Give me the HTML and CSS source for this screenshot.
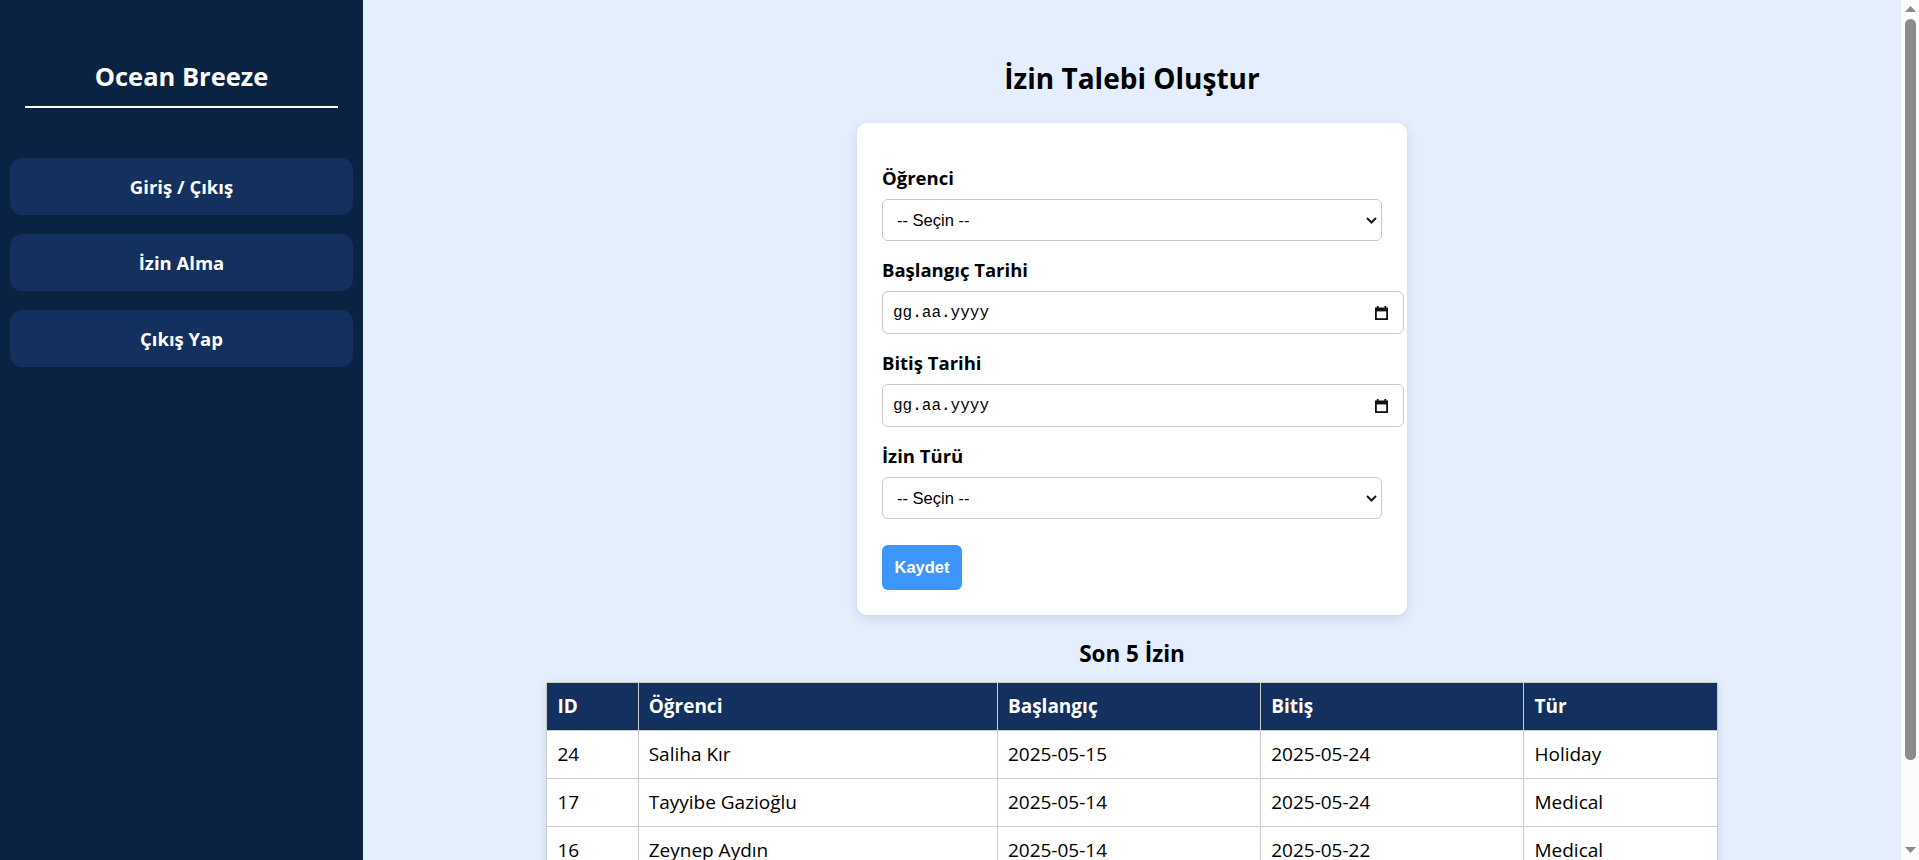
FILE: index.html
```html
<!DOCTYPE html>
<html lang="tr">
<head>
<meta charset="utf-8">
<title>İzin Talebi Oluştur</title>
<link rel="stylesheet" href="styles.css">
</head>
<body>
<div class="layout">
  <aside class="sidebar">
    <h2 class="brand">Ocean Breeze</h2>
    <nav class="nav">
      <a class="nav-item" href="#">Giriş / Çıkış</a>
      <a class="nav-item" href="#">İzin Alma</a>
      <a class="nav-item" href="#">Çıkış Yap</a>
    </nav>
  </aside>
  <main class="main">
    <h1 class="page-title">İzin Talebi Oluştur</h1>
    <form class="card">
      <label class="field-label">Öğrenci</label>
      <div class="select-wrap">
        <select class="select"><option>-- Seçin --</option></select>
        <svg class="chevron" width="11" height="7" viewBox="0 0 11 7"><polyline points="1,1 5.5,5.5 10,1" fill="none" stroke="#1a1a1a" stroke-width="2"/></svg>
      </div>
      <label class="field-label">Başlangıç Tarihi</label>
      <div class="date-input">
        <span class="date-text">gg.aa.yyyy</span>
        <svg class="cal" width="13" height="14" viewBox="0 0 13 14"><rect x="1.8" y="0" width="1.8" height="3" fill="#111"/><rect x="9.4" y="0" width="1.8" height="3" fill="#111"/><rect x="0.9" y="2.4" width="11.2" height="10.7" fill="none" stroke="#111" stroke-width="1.8"/><rect x="0.9" y="2.2" width="11.2" height="3.2" fill="#111"/></svg>
      </div>
      <label class="field-label">Bitiş Tarihi</label>
      <div class="date-input">
        <span class="date-text">gg.aa.yyyy</span>
        <svg class="cal" width="13" height="14" viewBox="0 0 13 14"><rect x="1.8" y="0" width="1.8" height="3" fill="#111"/><rect x="9.4" y="0" width="1.8" height="3" fill="#111"/><rect x="0.9" y="2.4" width="11.2" height="10.7" fill="none" stroke="#111" stroke-width="1.8"/><rect x="0.9" y="2.2" width="11.2" height="3.2" fill="#111"/></svg>
      </div>
      <label class="field-label">İzin Türü</label>
      <div class="select-wrap">
        <select class="select"><option>-- Seçin --</option></select>
        <svg class="chevron" width="11" height="7" viewBox="0 0 11 7"><polyline points="1,1 5.5,5.5 10,1" fill="none" stroke="#1a1a1a" stroke-width="2"/></svg>
      </div>
      <button type="button" class="btn">Kaydet</button>
    </form>

    <h3 class="section-title">Son 5 İzin</h3>
    <table class="table">
      <colgroup>
        <col class="c-id"><col class="c-name"><col class="c-date"><col class="c-date"><col class="c-type">
      </colgroup>
      <thead>
        <tr><th>ID</th><th>Öğrenci</th><th>Başlangıç</th><th>Bitiş</th><th>Tür</th></tr>
      </thead>
      <tbody>
        <tr><td>24</td><td>Saliha Kır</td><td>2025-05-15</td><td>2025-05-24</td><td>Holiday</td></tr>
        <tr><td>17</td><td>Tayyibe Gazioğlu</td><td>2025-05-14</td><td>2025-05-24</td><td>Medical</td></tr>
        <tr><td>16</td><td>Zeynep Aydın</td><td>2025-05-14</td><td>2025-05-22</td><td>Medical</td></tr>
        <tr><td>15</td><td>Elif Yıldız</td><td>2025-05-12</td><td>2025-05-16</td><td>Holiday</td></tr>
      </tbody>
    </table>
  </main>
  <div class="vscroll" aria-hidden="true">
    <div class="sb-btn">
      <svg width="11" height="6" viewBox="0 0 11 6"><polygon points="0,6 5.5,0 11,6" fill="#8b8b8b"/></svg>
    </div>
    <div class="sb-track"><div class="sb-thumb"></div></div>
    <div class="sb-btn sb-btn-down">
      <svg width="11" height="6" viewBox="0 0 11 6"><polygon points="0,0 11,0 5.5,6" fill="#8b8b8b"/></svg>
    </div>
  </div>
</div>
</body>
</html>
```

FILE: styles.css
```css
html, body {
  margin: 0;
  padding: 0;
}
body {
  font-family: "Open Sans", "Noto Sans", sans-serif;
  color: #000;
  background: #e4eefd;
}

.layout {
  display: flex;
  min-height: 100vh;
}

/* Sidebar */
.sidebar {
  width: 363px;
  flex: 0 0 363px;
  box-sizing: border-box;
  background: #0a2342;
  padding: 57px 10px 0;
}
.brand {
  margin: 0 15px;
  padding-bottom: 11px;
  border-bottom: 2px solid #ffffff;
  color: #ffffff;
  font-size: 25.5px;
  line-height: 38px;
  font-weight: 700;
  text-align: center;
}
.nav {
  display: flex;
  flex-direction: column;
  gap: 19px;
  margin-top: 50px;
}
.nav-item {
  display: flex;
  align-items: center;
  justify-content: center;
  height: 57px;
  border-radius: 12px;
  background: #14305f;
  color: #ffffff;
  text-decoration: none;
  font-weight: 700;
  font-size: 18.5px;
}

/* Main */
.main {
  flex: 1;
  min-width: 0;
  padding: 60px 37px 38px;
}
.page-title {
  margin: 0;
  text-align: center;
  font-size: 28px;
  line-height: 36px;
  font-weight: 700;
}
.card {
  box-sizing: border-box;
  width: 550px;
  margin: 27px auto 0;
  padding: 26px 25px 25px;
  background: #ffffff;
  border-radius: 10px;
  box-shadow: 0 4px 12px rgba(20, 48, 94, 0.12);
}
.field-label {
  display: block;
  margin: 17px 0 9px;
  font-size: 18.5px;
  line-height: 24px;
  font-weight: 700;
}
.select-wrap {
  position: relative;
}
.select {
  -webkit-appearance: none;
  appearance: none;
  display: block;
  box-sizing: border-box;
  width: 100%;
  height: 42px;
  margin: 0;
  padding: 0 30px 0 14px;
  border: 1px solid #c8c8c8;
  border-radius: 6px;
  background: #ffffff;
  color: #000;
  font-family: "Liberation Sans", Arial, sans-serif;
  font-size: 16.5px;
}
.chevron {
  position: absolute;
  right: 5px;
  top: 18px;
  pointer-events: none;
}
.date-input {
  display: flex;
  align-items: center;
  justify-content: space-between;
  width: 100%;
  height: 41px;
  padding: 0 10px;
  border: 1px solid #c8c8c8;
  border-radius: 6px;
  background: #ffffff;
}
.date-text {
  font-family: "Liberation Mono", "DejaVu Sans Mono", monospace;
  font-size: 16px;
  color: #000;
}
.cal {
  margin-right: 5px;
}
.btn {
  display: block;
  height: 45px;
  margin-top: 26px;
  padding: 0 12.5px;
  border: 0;
  border-radius: 6px;
  background: #3d96fb;
  color: #ffffff;
  font-family: "Liberation Sans", Arial, sans-serif;
  font-size: 16.5px;
  font-weight: 700;
}

/* Table */
.section-title {
  margin: 24px 0 13px;
  text-align: center;
  font-size: 22.5px;
  line-height: 30px;
  font-weight: 700;
}
.table {
  width: 80%;
  margin: 0 auto;
  border-collapse: collapse;
  background: #ffffff;
  box-shadow: 0 2px 8px rgba(20, 48, 94, 0.12);
  font-size: 19px;
}
.c-id { width: 7.8%; }
.c-name { width: 30.7%; }
.c-date { width: 22.5%; }
.c-type { width: 16.5%; }
.table th,
.table td {
  border: 1px solid #cccccc;
  padding: 11px 10px;
  line-height: 25px;
  text-align: left;
}
.table th {
  background: #14305e;
  color: #ffffff;
  font-weight: 700;
}

/* Page scrollbar as shown in the screenshot */
.vscroll {
  flex: 0 0 18px;
  width: 18px;
  height: 100vh;
  position: sticky;
  top: 0;
  display: flex;
  flex-direction: column;
  background: #fbfbfb;
}
.sb-btn {
  height: 17px;
  flex: 0 0 17px;
  display: flex;
  align-items: center;
  justify-content: center;
  padding-left: 1px;
}
.sb-btn-down {
  align-items: flex-start;
  padding-top: 4px;
  box-sizing: border-box;
}
.sb-track {
  flex: 1;
  padding: 2px 3px 0 4px;
}
.sb-thumb {
  height: 741px;
  border-radius: 6px;
  background: #8b8b8b;
}
```
